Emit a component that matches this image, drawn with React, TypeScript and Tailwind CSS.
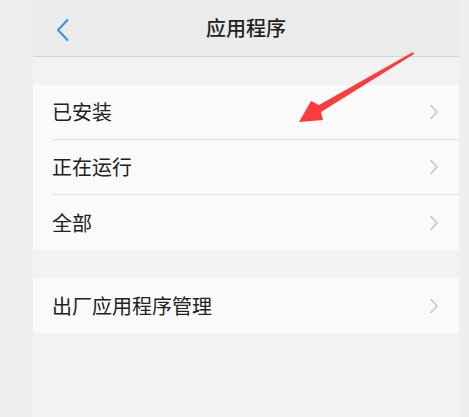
import { ReactNode } from 'react'

const font = { fontFamily: '"Noto Sans CJK SC", "Noto Sans", sans-serif' }

function Chevron() {
  return (
    <svg width="10" height="16" viewBox="0 0 10 16" fill="none">
      <path d="M2 1.5 L8 8 L2 14.5" stroke="#c6c6c6" strokeWidth="1.6" strokeLinecap="round" strokeLinejoin="round" />
    </svg>
  )
}

function Row({ label, divider }: { label: string; divider?: boolean }) {
  return (
    <div className="ml-[19px]">
      <div
        className={
          divider
            ? 'h-[55px] flex items-center justify-between pr-[20px] border-b border-[#e2e2e2]'
            : 'h-[55px] flex items-center justify-between pr-[20px]'
        }
      >
        <span className="text-[20px] leading-none text-[#222222]">{label}</span>
        <Chevron />
      </div>
    </div>
  )
}

function Section({ children }: { children: ReactNode }) {
  return <div className="bg-[#fafafa]">{children}</div>
}

export default function App() {
  return (
    <div className="w-[469px] h-[417px] bg-[#efefef] flex overflow-hidden relative" style={font}>
      <div className="ml-[33px] w-[426px] h-full bg-[#f2f2f2] flex flex-col">
        {/* Header */}
        <div className="h-[57px] bg-[#ebebeb] border-b border-[#d3d3d3] flex items-center relative">
          <svg className="absolute left-[23px] top-[18px]" width="14" height="24" viewBox="0 0 14 24" fill="none">
            <path d="M11.5 2 L2 12 L11.5 22" stroke="#3b97e6" strokeWidth="2.2" strokeLinecap="round" strokeLinejoin="round" />
          </svg>
          <div className="flex-1 text-center text-[20px] leading-none text-[#222222] font-medium">应用程序</div>
        </div>

        <div className="h-[28px]" />

        <Section>
          <Row label="已安装" divider />
          <Row label="正在运行" divider />
          <Row label="全部" />
        </Section>

        <div className="h-[28px]" />

        <Section>
          <Row label="出厂应用程序管理" />
        </Section>
      </div>

      {/* red annotation arrow */}
      <svg className="absolute left-0 top-0 pointer-events-none" width="469" height="417">
        <polygon
          points="413,52 319,105 311,101 299,122 323,120 321,112 414,54"
          fill="#fb3c3c"
        />
      </svg>
    </div>
  )
}
